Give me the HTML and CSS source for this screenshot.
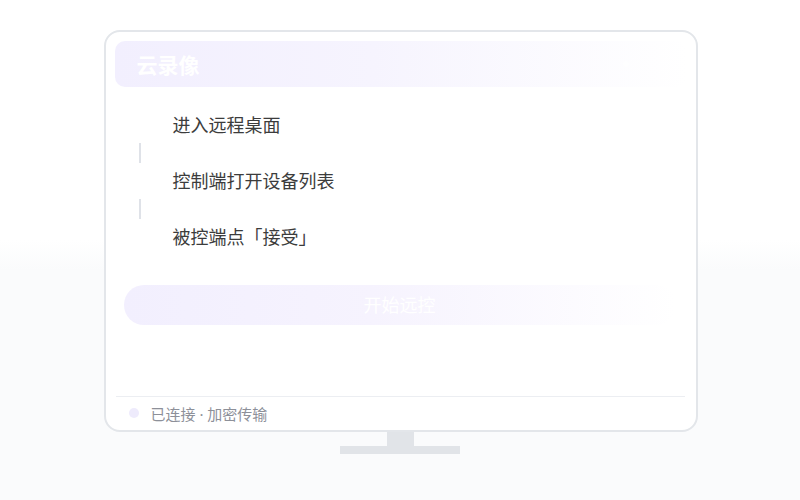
FILE: index.html
```html
<!DOCTYPE html>
<html lang="zh-CN">
<head>
<meta charset="utf-8">
<title>云录像</title>
<link rel="stylesheet" href="styles.css">
</head>
<body>
<div class="stage">
  <div class="monitor">
    <div class="header">
      <span class="title">云录像</span>
      <span class="rec">
        <span class="rec-dot"></span>
        <span class="rec-time">00:00</span>
      </span>
    </div>
    <div class="steps">
      <div class="step"><span class="marker"></span><span class="step-text">进入远程桌面</span></div>
      <div class="connector"></div>
      <div class="step"><span class="marker"></span><span class="step-text">控制端打开设备列表</span></div>
      <div class="connector"></div>
      <div class="step"><span class="marker"></span><span class="step-text">被控端点「接受」</span></div>
    </div>
    <div class="btn">开始远控</div>
    <div class="spacer"></div>
    <div class="footer">
      <span class="status-dot"></span>
      <span class="status-text">已连接 · 加密传输</span>
    </div>
  </div>
  <div class="neck"></div>
  <div class="base"></div>
</div>
</body>
</html>
```

FILE: styles.css
```css
* { box-sizing: border-box; }
html, body { margin: 0; padding: 0; }
body {
  width: 800px;
  height: 500px;
  overflow: hidden;
  font-family: "Noto Sans CJK SC", "Noto Sans", sans-serif;
  background: linear-gradient(180deg, #ffffff 0%, #ffffff 48%, #fafbfc 54%, #fafbfc 100%);
}
.stage {
  padding-top: 30px;
  display: flex;
  flex-direction: column;
  align-items: center;
}
.monitor {
  width: 594px;
  height: 402px;
  margin-left: 1px;
  border: 2px solid #e3e6ea;
  border-radius: 16px;
  background: #ffffff;
  padding: 9px 9px 0 9px;
  display: flex;
  flex-direction: column;
}
.header {
  height: 46px;
  border-radius: 10px;
  background: linear-gradient(90deg, #f2effe 0%, #f6f4fe 45%, rgba(255,255,255,0) 100%);
  display: flex;
  align-items: center;
  justify-content: space-between;
  padding: 0 22px;
}
.title {
  color: #ffffff;
  font-size: 21px;
  font-weight: 700;
  line-height: 1;
  margin-top: 1px;
}
.rec {
  display: flex;
  align-items: center;
  gap: 6px;
  opacity: 0.9;
}
.rec-dot {
  width: 6px;
  height: 6px;
  border-radius: 50%;
  background: #ffffff;
}
.rec-time {
  color: #ffffff;
  font-size: 12px;
}
.steps {
  margin-top: 20px;
  padding-left: 11px;
  display: flex;
  flex-direction: column;
}
.step {
  height: 36px;
  display: flex;
  align-items: center;
  gap: 19px;
}
.marker {
  width: 28px;
  height: 28px;
  border-radius: 50%;
  background: #ffffff;
  flex: none;
}
.step-text {
  font-size: 18px;
  color: #3c3c3c;
  line-height: 1;
  margin-top: -3px;
}
.connector {
  width: 2px;
  height: 20px;
  margin-left: 13px;
  background: #dfe2e8;
}
.btn {
  margin: 30px 11px 0 9px;
  height: 40px;
  padding-bottom: 3px;
  border-radius: 20px;
  background: linear-gradient(90deg, #f2effe 0%, #f6f3fe 45%, rgba(255,255,255,0) 100%);
  color: #ffffff;
  font-size: 18px;
  display: flex;
  align-items: center;
  justify-content: center;
}
.spacer { flex: 1; }
.footer {
  margin: 0 2px 0 1px;
  border-top: 1px solid #eceef2;
  height: 34px;
  padding: 0 0 1px 13px;
  display: flex;
  align-items: center;
  gap: 12px;
}
.status-dot {
  width: 10px;
  height: 10px;
  border-radius: 50%;
  background: #eeebfc;
}
.status-text {
  font-family: "Noto Sans", "Noto Sans CJK SC", sans-serif;
  font-size: 15px;
  color: #8d9099;
  white-space: pre;
}
.neck {
  width: 27px;
  height: 14px;
  margin-left: 1px;
  background: #e1e4e8;
}
.base {
  width: 120px;
  height: 8px;
  background: #e1e4e8;
}
```
